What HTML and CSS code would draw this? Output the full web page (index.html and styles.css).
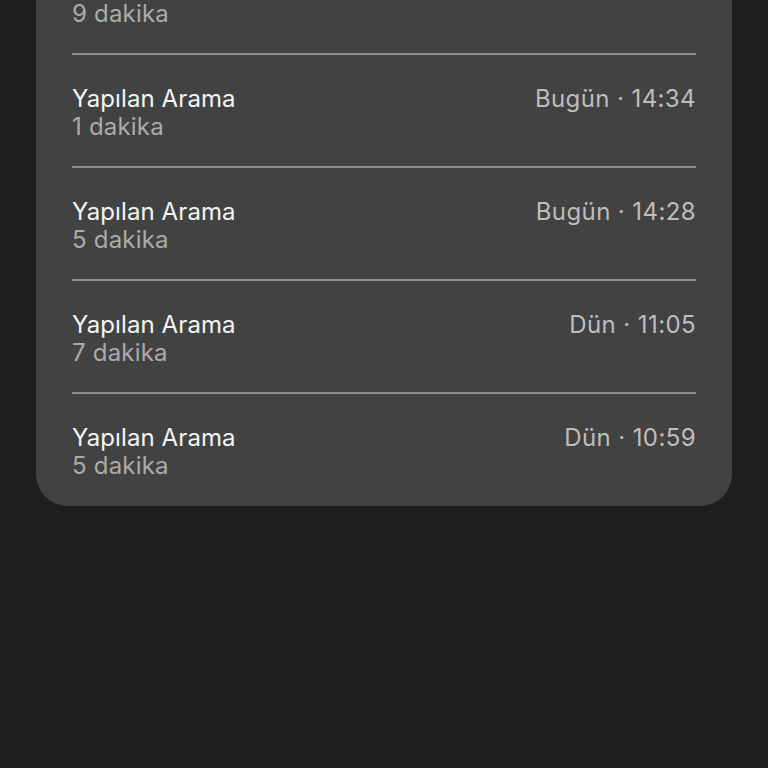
FILE: index.html
```html
<!DOCTYPE html>
<html lang="tr">
<head>
<meta charset="UTF-8">
<meta name="viewport" content="width=device-width,user-scalable=no" />
<title>Arama Geçmişi</title>
<link rel="stylesheet" href="styles.css">
</head>
<body>
<div id="page">
	<ul class="calls">
		<li>
			<div class="info">
				<span class="type">Yapılan Arama</span>
				<span class="dur">9 dakika</span>
			</div>
			<span class="when">Bugün · 15:02</span>
		</li>
		<li>
			<div class="info">
				<span class="type">Yapılan Arama</span>
				<span class="dur">1 dakika</span>
			</div>
			<span class="when">Bugün · 14:34</span>
		</li>
		<li>
			<div class="info">
				<span class="type">Yapılan Arama</span>
				<span class="dur">5 dakika</span>
			</div>
			<span class="when">Bugün · 14:28</span>
		</li>
		<li>
			<div class="info">
				<span class="type">Yapılan Arama</span>
				<span class="dur">7 dakika</span>
			</div>
			<span class="when">Dün · 11:05</span>
		</li>
		<li>
			<div class="info">
				<span class="type">Yapılan Arama</span>
				<span class="dur">5 dakika</span>
			</div>
			<span class="when">Dün · 10:59</span>
		</li>
	</ul>
</div>
</body>
</html>
```

FILE: styles.css
```css
html, body {
	margin: 0;
	height: 100%;
	background: #1e1e1e;
	overflow: hidden;
}
#page {
	font-family: Inter, "Liberation Sans", sans-serif;
	-webkit-font-smoothing: antialiased;
}
.calls {
	margin: -58px 36px 0;
	padding: 0 36px;
	list-style: none;
	background: #424242;
	border-radius: 32px;
}
.calls li {
	display: flex;
	justify-content: space-between;
	align-items: flex-start;
	padding: 29px 0 25px;
	border-bottom: 2px solid #8c8c8c;
}
.calls li:last-child {
	padding-bottom: 26px;
	border-bottom: none;
}
.info {
	display: flex;
	flex-direction: column;
}
.type {
	font-size: 24px;
	line-height: 29px;
	letter-spacing: 0.1px;
	color: #f4f4f4;
}
.dur {
	font-size: 24px;
	line-height: 28px;
	letter-spacing: 0.2px;
	color: #ababab;
}
.when {
	font-size: 24px;
	line-height: 29px;
	letter-spacing: 0.4px;
	color: #bdbdbd;
}
```
